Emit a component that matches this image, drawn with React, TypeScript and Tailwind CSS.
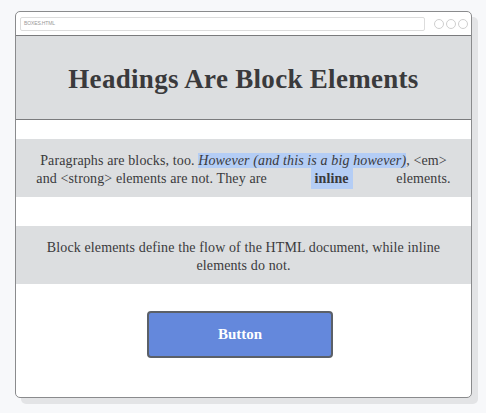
export default function App() {
  return (
    <div className="min-h-screen bg-[#f7f8fa] pt-[11px] pl-[15px]" style={{ fontFamily: '"Liberation Serif", serif' }}>
      <div className="w-[457px] h-[387px] border-[1.5px] border-[#8a8b8d] rounded-[5px] bg-white shadow-[6px_6px_0_#e3e4e6] flex flex-col overflow-hidden">
        <div className="h-[23px] shrink-0 flex items-center pl-[4px] pr-[3px] gap-[9px]">
          <div className="flex-1 h-[14px] border border-[#dcdcdc] rounded-[2px] flex items-center pl-[3px]">
            <span className="text-[5px] text-[#999] tracking-tight" style={{ fontFamily: '"Liberation Sans", sans-serif' }}>BOXES.HTML</span>
          </div>
          <div className="flex gap-[2px]">
            <span className="w-[10px] h-[10px] rounded-full border border-[#cfcfcf]" />
            <span className="w-[10px] h-[10px] rounded-full border border-[#cfcfcf]" />
            <span className="w-[10px] h-[10px] rounded-full border border-[#cfcfcf]" />
          </div>
        </div>
        <div className="h-[85px] shrink-0 bg-[#dcdee0] border-y-[1.5px] border-[#7a7b7d] flex items-center justify-center pt-[3px]">
          <h1 className="text-[27px] font-bold text-[#3a3a3c] tracking-[0.3px]">Headings Are Block Elements</h1>
        </div>
        <div className="h-[19px] shrink-0" />
        <div className="h-[58px] shrink-0 bg-[#dcdee0] flex items-center justify-center px-[18px] pt-[4px]">
          <p className="text-center text-[14px] leading-[18px] text-[#3a3a3c] tracking-[0.12px]">
            Paragraphs are blocks, too. <em className="bg-[#b4cdf5]">However (and this is a big however)</em>, &lt;em&gt; and &lt;strong&gt; elements are not. They are{' '}
            <strong className="bg-[#b4cdf5] mx-[40px] px-[4px] py-[3px]">inline</strong>{' '}elements.
          </p>
        </div>
        <div className="h-[29px] shrink-0" />
        <div className="h-[58px] shrink-0 bg-[#dcdee0] flex items-center justify-center px-[30px] pt-[4px]">
          <p className="text-center text-[14px] leading-[18px] text-[#3a3a3c] tracking-[0.12px]">
            Block elements define the flow of the HTML document, while inline elements do not.
          </p>
        </div>
        <div className="flex-1 flex justify-center pt-[27px] pr-[7px]">
          <button className="w-[186px] h-[47px] bg-[#6488dc] border-2 border-[#5b6068] rounded-[4px] text-white font-bold text-[15px]">
            Button
          </button>
        </div>
      </div>
    </div>
  );
}
